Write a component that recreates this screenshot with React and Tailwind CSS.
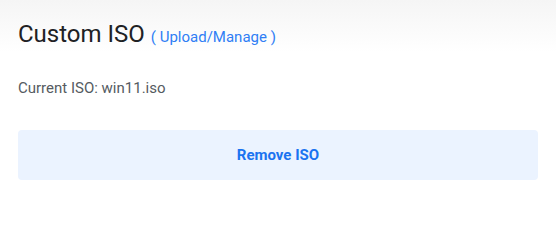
export default function App() {
  return (
    <div className="min-h-[247px] w-full bg-[linear-gradient(to_bottom,#f5f5f5_0px,#ffffff_52px)] px-[18px] pt-[19px] font-['Roboto',sans-serif]">
      <h2 className="text-[24px] leading-[30px] font-normal text-[#202124]">
        Custom ISO
        <a href="#" className="ml-[6px] text-[15px] text-[#2f7ef5]">
          ( Upload/Manage )
        </a>
      </h2>
      <p className="mt-[26px] text-[15px] leading-[20px] text-[#555b61]">
        Current ISO: win11.iso
      </p>
      <button
        type="button"
        className="mt-[32px] flex h-[50px] w-full items-center justify-center rounded-[4px] bg-[#ebf3ff] text-[15px] font-bold text-[#1a73f0]"
      >
        Remove ISO
      </button>
    </div>
  );
}
